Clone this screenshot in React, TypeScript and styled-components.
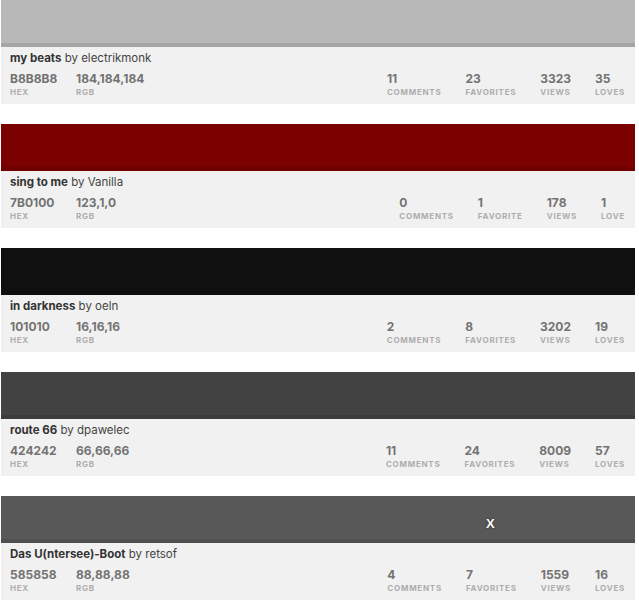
import React from "react";
import styled, { createGlobalStyle } from "styled-components";

const GlobalStyle = createGlobalStyle`
  body {
    margin: 0;
    background: #ffffff;
    font-family: "Inter", "Roboto", sans-serif;
  }
`;

const StyledList = styled.div`
  display: flex;
  flex-direction: column;
  gap: 20px;
  width: 634px;
  padding-left: 1px;
`;

const StyledCard = styled.div`
  background: #f1f1f1;
`;

const StyledSwatch = styled.div<{ $color: string }>`
  position: relative;
  height: 47px;
  background: ${props => props.$color};
  box-shadow: inset 0 -4px 0 rgba(0, 0, 0, 0.1);
`;

const StyledClose = styled.span`
  position: absolute;
  left: 485px;
  top: 21px;
  font-family: "Liberation Sans", Arial, sans-serif;
  font-weight: 700;
  font-size: 13px;
  line-height: 13px;
  color: #ffffff;
  text-shadow: 0 0 2px rgba(0, 0, 0, 0.6);
`;

const StyledInfo = styled.div`
  height: 57px;
  box-sizing: border-box;
  padding: 4px 10px 0 9px;
`;

const StyledTitle = styled.div`
  font-size: 11.5px;
  line-height: 14px;
  color: #444;
  white-space: nowrap;

  b {
    font-weight: 700;
    color: #333;
  }
`;

const StyledRow = styled.div`
  display: flex;
  margin-top: 7px;
`;

const StyledColors = styled.div`
  display: flex;
`;

const StyledStats = styled.div`
  display: flex;
  gap: 24px;
  margin-left: auto;
`;

const StyledItem = styled.div<{ $width?: number }>`
  width: ${props => (props.$width ? `${props.$width}px` : "auto")};
`;

const StyledValue = styled.div`
  font-size: 12px;
  line-height: 14px;
  font-weight: 700;
  color: #737373;
`;

const StyledLabel = styled.div`
  margin-top: 1px;
  font-size: 8px;
  line-height: 10px;
  font-weight: 700;
  letter-spacing: 0.75px;
  text-transform: uppercase;
  color: #adadad;
`;

interface IPalette {
  title: string;
  author: string;
  hex: string;
  comments: number;
  favorites: number;
  views: number;
  loves: number;
  hovered?: boolean;
}

const palettes: IPalette[] = [
  { title: "my beats", author: "electrikmonk", hex: "B8B8B8", comments: 11, favorites: 23, views: 3323, loves: 35 },
  { title: "sing to me", author: "Vanilla", hex: "7B0100", comments: 0, favorites: 1, views: 178, loves: 1 },
  { title: "in darkness", author: "oeln", hex: "101010", comments: 2, favorites: 8, views: 3202, loves: 19 },
  { title: "route 66", author: "dpawelec", hex: "424242", comments: 11, favorites: 24, views: 8009, loves: 57 },
  { title: "Das U(ntersee)-Boot", author: "retsof", hex: "585858", comments: 4, favorites: 7, views: 1559, loves: 16, hovered: true }
];

const toRgb = (hex: string) =>
  [0, 2, 4].map(i => parseInt(hex.slice(i, i + 2), 16)).join(",");

const plural = (n: number, word: string) => (n === 1 ? word : `${word}s`);

const Stat: React.FC<{ value: React.ReactNode; label: string; width?: number }> = ({ value, label, width }) => (
  <StyledItem $width={width}>
    <StyledValue>{value}</StyledValue>
    <StyledLabel>{label}</StyledLabel>
  </StyledItem>
);

const PaletteCard: React.FC<{ palette: IPalette }> = ({ palette }) => (
  <StyledCard>
    <StyledSwatch $color={`#${palette.hex}`}>
      {palette.hovered && <StyledClose>X</StyledClose>}
    </StyledSwatch>
    <StyledInfo>
      <StyledTitle>
        <b>{palette.title}</b> by {palette.author}
      </StyledTitle>
      <StyledRow>
        <StyledColors>
          <Stat value={palette.hex} label="Hex" width={66} />
          <Stat value={toRgb(palette.hex)} label="RGB" />
        </StyledColors>
        <StyledStats>
          <Stat value={palette.comments} label="Comments" />
          <Stat value={palette.favorites} label={plural(palette.favorites, "Favorite")} />
          <Stat value={palette.views} label="Views" />
          <Stat value={palette.loves} label={plural(palette.loves, "Love")} />
        </StyledStats>
      </StyledRow>
    </StyledInfo>
  </StyledCard>
);

const App: React.FC = () => (
  <>
    <GlobalStyle />
    <StyledList>
      {palettes.map(p => (
        <PaletteCard key={p.hex} palette={p} />
      ))}
    </StyledList>
  </>
);

export default App;
